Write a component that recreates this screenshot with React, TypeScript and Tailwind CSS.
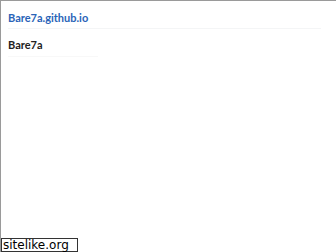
import React from 'react';

export default function App() {
  return (
    <div className="relative w-[336px] h-[252px] bg-white overflow-hidden border-t border-l border-[#9a9a9a] font-['Lato',sans-serif]">
      <div className="pl-[7px] pt-[10px]">
        <div className="pb-[3px] border-b border-[#f4f5f6] w-[313px] text-[11px] font-bold text-[#2a64b8] leading-[14px]">
          Bare7a.github.io
        </div>
        <div className="pt-[9px] pb-[4px] border-b border-[#f8f8f8] w-[90px] text-[11px] font-bold text-[#222] leading-[14px]">
          Bare7a
        </div>
      </div>
      <div className="absolute left-0 bottom-0 w-[77px] h-[14px] bg-white border border-[#333] flex items-center pl-[1px] font-['DejaVu_Sans',sans-serif] text-[12px] leading-none text-black">
        sitelike.org
      </div>
    </div>
  );
}
